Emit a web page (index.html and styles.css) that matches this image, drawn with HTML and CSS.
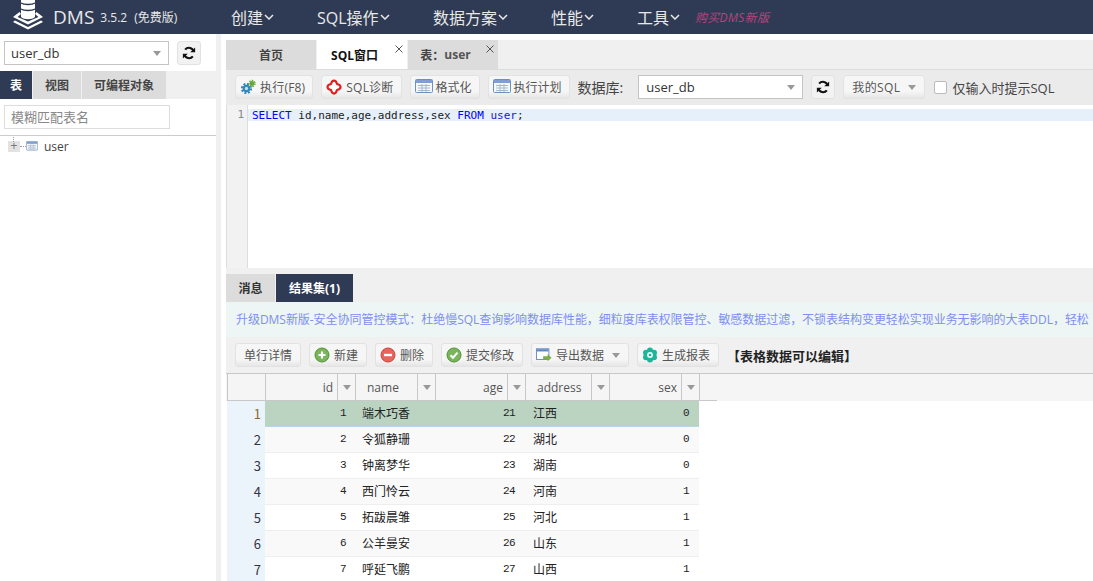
FILE: index.html
```html
<!DOCTYPE html>
<html lang="en">
<head>
  <meta charset="UTF-8" />
  <title>DMS</title>
  <link rel="stylesheet" href="styles.css">
</head>
<body>
  <svg class="sprites" width="0" height="0">
    <symbol id="i-refresh" viewBox="0 0 16 16">
      <path d="M13.400 6.200A5.600 5.600 0 0 0 3.600 4.200" fill="none" stroke="#111" stroke-width="2.400"/>
      <path d="M15 1.600v5.600H9.400z" fill="#111"/>
      <path d="M2.600 9.800a5.600 5.600 0 0 0 9.800 2" fill="none" stroke="#111" stroke-width="2.400"/>
      <path d="M1 14.400V8.800h5.600z" fill="#111"/>
    </symbol>
    <symbol id="i-sheet" viewBox="0 0 18 16">
      <rect x=".5" y=".5" width="17" height="13" rx="1" fill="#f4f7fb" stroke="#6f8fbd"/>
      <rect x="1" y="1" width="16" height="3" fill="#7f9fd0"/>
      <path d="M3 6.500h12M3 9h12M3 11.500h12M7 5v8M11 5v8" stroke="#a9b8cc" fill="none"/>
    </symbol>
    <symbol id="i-close" viewBox="0 0 8 8">
      <path d="M.5.5l7 7M7.500.5l-7 7" stroke="#555" fill="none"/>
    </symbol>
  </svg>

  <header class="topbar">
    <div class="brand">
      <svg class="logo" viewBox="0 0 30 30" width="30" height="30">
        <path d="M8 -2h14v19c-3 3-11 3-14 0z" fill="#fff"/>
        <path d="M8 3c3 2 11 2 14 0M8 9c3 2 11 2 14 0" stroke="#2f3b54" stroke-width="1.500" fill="none"/>
        <path d="M6.500 12 0 17l15 7.500L30 17l-6.500-5-1.500 2 3.500 3L15 21.500 4.500 17 8 14z" fill="#fff"/>
        <path d="M2 20.500 0 22l15 7.500L30 22l-2-1.500-13 6.500z" fill="#fff"/>
      </svg>
      <span class="brand-name">DMS</span>
      <span class="brand-ver">3.5.2</span>
      <span class="brand-free">(免费版)</span>
    </div>
    <nav class="menu">
      <a class="m1">创建<svg class="chev" viewBox="0 0 10 6"><path d="M1 1l4 4 4-4" /></svg></a>
      <a class="m2">SQL操作<svg class="chev" viewBox="0 0 10 6"><path d="M1 1l4 4 4-4" /></svg></a>
      <a class="m3">数据方案<svg class="chev" viewBox="0 0 10 6"><path d="M1 1l4 4 4-4" /></svg></a>
      <a class="m4">性能<svg class="chev" viewBox="0 0 10 6"><path d="M1 1l4 4 4-4" /></svg></a>
      <a class="m5">工具<svg class="chev" viewBox="0 0 10 6"><path d="M1 1l4 4 4-4" /></svg></a>
    </nav>
    <a class="buy">购买DMS新版</a>
  </header>

  <div class="main">
    <aside class="side">
      <div class="db-row">
        <div class="select db-select"><span>user_db</span><i class="caret"></i></div>
        <button class="icon-btn"><svg width="14" height="14"><use href="#i-refresh"/></svg></button>
      </div>
      <div class="side-tabs">
        <span class="stab on">表</span>
        <span class="stab w48">视图</span>
        <span class="stab w84">可编程对象</span>
      </div>
      <div class="filter-row">
        <div class="filter">模糊匹配表名</div>
      </div>
      <div class="tree">
        <span class="tree-line"></span>
        <span class="tree-plus">+</span>
        <span class="tree-dots"></span>
        <svg width="12" height="11"><use href="#i-sheet"/></svg>
        <span class="tree-label">user</span>
      </div>
    </aside>
    <div class="split"></div>

    <section class="work">
      <div class="tabs">
        <span class="tab">首页</span>
        <span class="tab active closable">SQL窗口<svg class="x" width="8" height="8"><use href="#i-close"/></svg></span>
        <span class="tab closable">表：<strong>user</strong><svg class="x" width="8" height="8"><use href="#i-close"/></svg></span>
      </div>

      <div class="toolbar sql-bar">
        <button class="btn wide">
          <svg width="16" height="16" viewBox="0 0 16 16">
            <circle cx="6.500" cy="9.500" r="3.800" fill="#2f86b8"/>
            <circle cx="6.500" cy="9.500" r="4.600" fill="none" stroke="#2f86b8" stroke-width="2" stroke-dasharray="2 1.600"/>
            <circle cx="6.500" cy="9.500" r="1.700" fill="#bfe0f0"/>
            <circle cx="12" cy="4.500" r="2.400" fill="#67a83a"/>
            <circle cx="12" cy="4.500" r="3" fill="none" stroke="#67a83a" stroke-width="1.400" stroke-dasharray="1.500 1.200"/>
          </svg>
          执行(F8)
        </button>
        <button class="btn wide">
          <svg width="16" height="16" viewBox="0 0 16 16"><path d="M6 2.500Q8 .5 10 2.500L11 5l2.500 1Q15.500 8 13.500 10L11 11l-1 2.500Q8 15.500 6 13.500L5 11l-2.500-1Q.5 8 2.500 6L5 5z" fill="#fff" stroke="#e01f1f" stroke-width="2.200"/></svg>
          SQL诊断
        </button>
        <button class="btn sheet"><svg width="18" height="16"><use href="#i-sheet"/></svg>格式化</button>
        <button class="btn sheet"><svg width="18" height="16"><use href="#i-sheet"/></svg>执行计划</button>
        <span class="lbl">数据库:</span>
        <div class="select sql-select"><span>user_db</span><i class="caret"></i></div>
        <button class="icon-btn"><svg width="14" height="14"><use href="#i-refresh"/></svg></button>
        <button class="btn my-sql">我的SQL<i class="caret"></i></button>
        <label class="check"><i class="box"></i>仅输入时提示SQL</label>
      </div>

      <div class="editor">
        <div class="gutter">1</div>
        <div class="code"><div class="line"><span class="kw">SELECT</span> id,name,age,address,sex <span class="kw">FROM</span> <span class="tb">user</span>;</div></div>
      </div>

      <div class="result-tabs">
        <span class="rtab">消息</span>
        <span class="rtab on">结果集(1)</span>
      </div>
      <div class="notice">升级DMS新版-安全协同管控模式：杜绝慢SQL查询影响数据库性能，细粒度库表权限管控、敏感数据过滤，不锁表结构变更轻松实现业务无影响的大表DDL，轻松</div>

      <div class="toolbar grid-bar">
        <button class="btn plain">单行详情</button>
        <button class="btn">
          <svg width="16" height="16" viewBox="0 0 16 16"><circle cx="8" cy="8" r="7" fill="#7ab55c" stroke="#4f9236"/><path d="M8 4.500v7M4.500 8h7" stroke="#fff" stroke-width="2.200"/></svg>
          新建
        </button>
        <button class="btn">
          <svg width="16" height="16" viewBox="0 0 16 16"><circle cx="8" cy="8" r="7" fill="#e8635c" stroke="#c9443d"/><path d="M4 8h8" stroke="#fff" stroke-width="2.400"/></svg>
          删除
        </button>
        <button class="btn">
          <svg width="16" height="16" viewBox="0 0 16 16"><circle cx="8" cy="8" r="7" fill="#7ab55c" stroke="#4f9236"/><path d="M4.500 8.200l2.500 2.500 4.500-5" stroke="#fff" stroke-width="2" fill="none"/></svg>
          提交修改
        </button>
        <button class="btn export">
          <svg width="16" height="16" viewBox="0 0 18 16"><rect x=".5" y="1" width="14" height="12" fill="#fff" stroke="#5f86bd"/><rect x="1" y="1.500" width="13" height="2.500" fill="#5f86bd"/><path d="M8 9.500h5V7l4.500 4-4.500 4v-2.500H8z" fill="#7fae45"/></svg>
          导出数据<i class="caret"></i>
        </button>
        <button class="btn">
          <svg width="16" height="16" viewBox="0 0 16 16">
            <g fill="#1db59a"><circle cx="8" cy="3.500" r="3"/><circle cx="12" cy="5.800" r="3"/><circle cx="12" cy="10.200" r="3"/><circle cx="8" cy="12.500" r="3"/><circle cx="4" cy="10.200" r="3"/><circle cx="4" cy="5.800" r="3"/></g>
            <circle cx="8" cy="8" r="3" fill="#e8faf6"/><circle cx="8" cy="8" r="1.300" fill="#1db59a"/>
          </svg>
          生成报表
        </button>
        <span class="tip">【表格数据可以编辑】</span>
      </div>

      <div class="grid">
        <div class="ghead">
          <div class="gc c-no"></div>
          <div class="gc c-num r">id</div><div class="gc c-arr"><i class="caret"></i></div>
          <div class="gc c-name">name</div><div class="gc c-arr"><i class="caret"></i></div>
          <div class="gc c-num r">age</div><div class="gc c-arr"><i class="caret"></i></div>
          <div class="gc c-addr">address</div><div class="gc c-arr"><i class="caret"></i></div>
          <div class="gc c-num r">sex</div><div class="gc c-arr"><i class="caret"></i></div>
          <div class="gc c-fill"></div>
        </div>
        <div class="grow sel"><span class="no">1</span><span class="v-id">1</span><span class="v-name">端木巧香</span><span class="v-age">21</span><span class="v-addr">江西</span><span class="v-sex">0</span></div>
        <div class="grow"><span class="no">2</span><span class="v-id">2</span><span class="v-name">令狐静珊</span><span class="v-age">22</span><span class="v-addr">湖北</span><span class="v-sex">0</span></div>
        <div class="grow"><span class="no">3</span><span class="v-id">3</span><span class="v-name">钟离梦华</span><span class="v-age">23</span><span class="v-addr">湖南</span><span class="v-sex">0</span></div>
        <div class="grow"><span class="no">4</span><span class="v-id">4</span><span class="v-name">西门怜云</span><span class="v-age">24</span><span class="v-addr">河南</span><span class="v-sex">1</span></div>
        <div class="grow"><span class="no">5</span><span class="v-id">5</span><span class="v-name">拓跋晨雏</span><span class="v-age">25</span><span class="v-addr">河北</span><span class="v-sex">1</span></div>
        <div class="grow"><span class="no">6</span><span class="v-id">6</span><span class="v-name">公羊曼安</span><span class="v-age">26</span><span class="v-addr">山东</span><span class="v-sex">1</span></div>
        <div class="grow"><span class="no">7</span><span class="v-id">7</span><span class="v-name">呼延飞鹏</span><span class="v-age">27</span><span class="v-addr">山西</span><span class="v-sex">1</span></div>
      </div>
    </section>
  </div>
</body>
</html>
```

FILE: styles.css
```css
/* Base */
html, body {
  margin: 0; padding: 0;
  width: 100%; height: 100%;
  overflow: hidden; background: #fff;
  color: #333;
  font-family: "Open Sans", "Noto Sans CJK SC", sans-serif;
  font-size: 13px;
}
.sprites { position: absolute; }
button { font: inherit; color: inherit; }

/* Top bar */
.topbar {
  height: 34px;
  background: #2f3b54;
  color: #e8e8e8;
  display: flex; align-items: center;
  overflow: hidden;
}
.brand { display: flex; align-items: center; width: 231px; flex: none; }
.logo { margin-left: 13px; margin-right: 10px; margin-top: -4px; flex: none; }
.brand-name { font-size: 19px; margin-right: 6px; }
.brand-ver { font-size: 12px; margin-right: 7px; }
.brand-free { font-size: 12px; }
.menu { display: flex; font-size: 16px; }
.menu a { display: flex; align-items: center; white-space: nowrap; }
.m1 { width: 86px; }
.m2 { width: 116px; }
.m3 { width: 118px; }
.m4 { width: 86px; }
.m5 { width: 58px; }
.chev { width: 10px; height: 6px; margin-left: 1px; }
.chev path { fill: none; stroke: #e8e8e8; stroke-width: 1.500; }
.buy { font-size: 12px; font-style: italic; color: #b8437f; white-space: nowrap; letter-spacing: .3px; }

/* Layout */
.main { display: flex; height: 547px; padding-top: 6px; box-sizing: border-box; }
.side { width: 216px; flex: none; }
.split { width: 5px; flex: none; margin-right: 5px; background: #f0f0f0; margin-top: -6px; }
.work { flex: 1; min-width: 0; overflow: hidden; }

/* Shared bits */
.select {
  display: flex; align-items: center; justify-content: space-between;
  box-sizing: border-box;
  height: 24px; padding: 0 7px;
  background: #fff;
  border: 1px solid #c4c4c4;
  color: #333;
}
.caret {
  display: inline-block; width: 0; height: 0;
  border-left: 4px solid transparent;
  border-right: 4px solid transparent;
  border-top: 5px solid #999;
}
.icon-btn {
  width: 24px; height: 24px; padding: 0;
  display: flex; align-items: center; justify-content: center;
  background: #f2f2f2;
  border: 1px solid #e2e2e2; border-radius: 3px;
}
.btn {
  height: 24px; padding: 0 8px 0 4px;
  display: inline-flex; align-items: center; gap: 4px;
  background: linear-gradient(#f6f6f6 70%, #e6e6e6);
  border: 1px solid #e2e2e2; border-radius: 3px;
  color: #555; font-size: 12px;
  white-space: nowrap;
}
.wide { letter-spacing: .2px; }

/* Sidebar */
.db-row { display: flex; align-items: center; padding-left: 4px; gap: 8px; margin-top: 1px; }
.db-select { width: 165px; padding-left: 6px; }
.side-tabs { display: flex; gap: 1px; margin-top: 6px; background: #f0f0f0; height: 28px; }
.stab {
  background: #dcdcdc; font-size: 12px; font-weight: 600; color: #444;
  display: flex; align-items: center; justify-content: center;
}
.stab.on { background: #2f3b54; color: #fff; width: 32px; }
.w48 { width: 48px; }
.w84 { width: 84px; }
.filter-row { padding: 6px 0 6px 4px; border-bottom: 1px solid #ccc; }
.filter {
  box-sizing: border-box; width: 166px; height: 24px; line-height: 22px;
  border: 1px solid #ddd; padding-left: 6px;
  color: #888; font-size: 13px;
}
.tree { position: relative; display: flex; align-items: center; height: 20px; padding-left: 8px; }
.tree-line { position: absolute; left: 13px; top: 1px; height: 5px; border-left: 1px dotted #999; }
.tree-plus {
  width: 12px; height: 11px; line-height: 10px; text-align: center;
  background: #e2e2e2; color: #777; font-size: 12px;
}
.tree-dots { width: 6px; border-top: 1px dotted #999; }
.tree-label { margin-left: 6px; font-size: 12px; color: #444; }

/* Tabs */
.tabs { display: flex; gap: 1px; height: 29px; background: #f0f0f0; }
.tab {
  position: relative; width: 90px; box-sizing: border-box;
  display: flex; align-items: center; justify-content: center;
  background: #dcdcdc; color: #444;
  font-size: 12px; font-weight: 600;
}
.tab.closable { padding-right: 15px; }
.tab strong { font-weight: 700; color: #555; }
.tab.active { background: #fff; color: #111; font-weight: 700; }
.x { position: absolute; right: 4px; top: 5px; }

/* Toolbars */
.toolbar { display: flex; align-items: center; height: 36px; box-sizing: border-box; white-space: nowrap; }
.sql-bar { background: #ebebeb; border-top: 1px solid #dcdcdc; padding: 0 0 2px 9px; }
.sql-bar .btn { margin-right: 8px; padding-top: 1px; }
.sql-bar .select { padding-top: 1px; }
.sql-bar .wide { padding-right: 7px; }
.sql-bar .sheet { gap: 3px; padding-right: 7px; }
.lbl { color: #444; margin-right: 15px; font-size: 14px; }
.sql-select { width: 165px; flex: none; margin-right: 8px; }
.sql-bar .icon-btn { margin-right: 8px; flex: none; }
.sql-bar .my-sql { gap: 8px; padding: 1px 8px 0; margin-right: 9px; letter-spacing: .4px; }
.check { display: inline-flex; align-items: center; font-size: 13px; color: #444; padding-top: 2px; }
.box { width: 11px; height: 11px; border: 1px solid #bbb; background: #fff; border-radius: 2px; margin-right: 5px; }

/* Editor */
.editor { display: flex; height: 163px; border-left: 1px solid #ddd; }
.gutter {
  width: 17px; flex: none; padding: 3px 3px 0 0; text-align: right;
  background: #f2f2f2; color: #888;
  font: 11px/13px "DejaVu Sans Mono", monospace;
}
.code { flex: 1; padding-top: 4px; border-left: 1px solid #ddd; font: 11px/13px "DejaVu Sans Mono", monospace; color: #222; white-space: pre; }
.line { background: #e6f0fb; padding-left: 4px; height: 12px; }
.kw { color: #0000ff; }
.tb { color: #2222bb; }

/* Result area */
.result-tabs { display: flex; gap: 1px; height: 34px; box-sizing: border-box; padding-top: 6px; background: #f0f0f0; }
.rtab {
  display: flex; align-items: center; justify-content: center;
  width: 49px; background: #dcdcdc; color: #333;
  font-size: 12px; font-weight: 600;
}
.rtab.on { width: 77px; background: #2f3b54; color: #fff; font-weight: 700; }
.notice {
  height: 35px; line-height: 35px; box-sizing: border-box;
  padding-left: 10px; background: #edf5f5;
  color: #7d8ff0; font-size: 12px; letter-spacing: -.04px;
  white-space: nowrap; overflow: hidden;
}
.grid-bar { background: #f0f0f0; padding-left: 9px; }
.grid-bar .btn { margin-right: 8px; }
.grid-bar .plain { padding: 0 8px; }
.export .caret { margin-left: 4px; }
.tip { color: #222; font-size: 13px; font-weight: 600; }

/* Grid */
.grid { font-size: 12px; }
.ghead { display: flex; height: 28px; box-sizing: border-box; background: #f5f5f5; border-top: 1px solid #c8c8c8; padding-left: 1px; }
.gc {
  box-sizing: border-box; height: 27px; line-height: 27px;
  border-right: 1px solid #c8c8c8; border-bottom: 1px solid #c8c8c8;
  color: #555; padding: 0 4px 0 11px;
}
.c-no { width: 39px; border-left: 1px solid #c8c8c8; }
.c-num { width: 72px; }
.r { text-align: right; }
.c-name { width: 62px; }
.c-addr { width: 66px; padding-right: 0; }
.c-arr { width: 18px; padding: 0; display: flex; align-items: center; justify-content: center; }
.gc.c-fill { width: 17px; border-right: 0; padding: 0; }

.grow { display: flex; height: 26px; box-sizing: border-box; border-bottom: 1px solid #eee; align-items: center; width: 472px; padding-bottom: 2px; margin-left: 1px; font-family: "Noto Sans CJK SC", sans-serif; color: #222; }
.grow:nth-child(even) { background: #fff; }
.grow:nth-child(odd) { background: #f9f9f9; }
.grow.sel { background: #bbd4c2; border-bottom-color: #b5d6ea; }
.grow span { display: block; box-sizing: border-box; }
.grow .no { align-self: stretch; width: 38px; padding-right: 4px; text-align: right; line-height: 25px; background: #ebf3fb; color: #334; font-size: 13px; margin-bottom: -3px; }
.grow.sel .no { color: #8a6a30; }
.v-id, .v-age, .v-sex { text-align: right; font: 11px "Liberation Mono", monospace; letter-spacing: -.6px; }
.v-id { width: 81px; }
.v-name { width: 143px; padding-left: 16px; font-size: 12px; }
.v-age { width: 26px; }
.v-addr { width: 144px; padding-left: 18px; font-size: 12px; }
.v-sex { width: 30px; }
```
